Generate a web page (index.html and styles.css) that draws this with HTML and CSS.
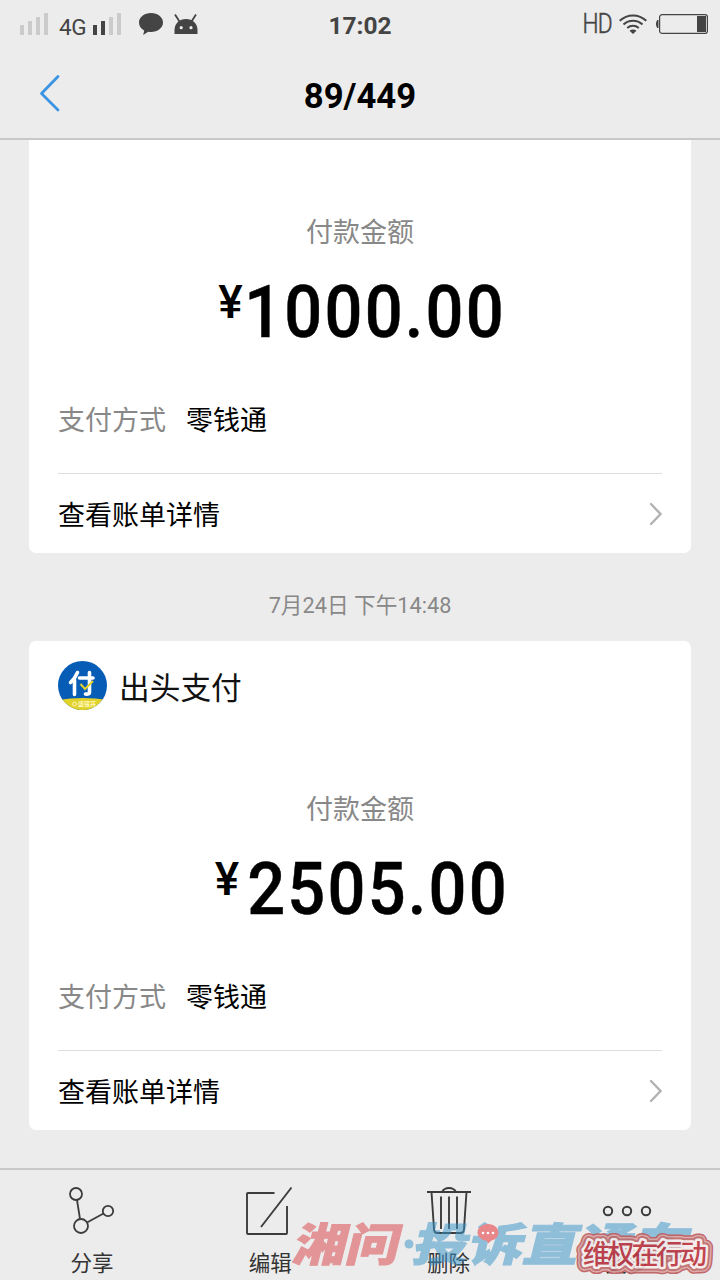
FILE: index.html
```html
<!DOCTYPE html>
<html lang="zh-CN">
<head>
<meta charset="utf-8">
<title>89/449</title>
<link rel="stylesheet" href="styles.css">
</head>
<body>
<div class="screen">
  <header class="top">
    <div class="status">
      <div class="status-left">
        <svg width="28" height="22" viewBox="0 0 28 22" fill="#cbcbcb"><path d="M0 12h4v10H0zM8 8h4v14H8zM16 4h4v18h-4zM24 0h4v22h-4z"/></svg>
        <span class="network">4G</span>
        <svg width="28" height="22" viewBox="0 0 28 22"><path fill="#444" d="M0 12h4v10H0zM8 8h4v14H8z"/><path fill="#cbcbcb" d="M16 4h4v18h-4zM24 0h4v22h-4z"/></svg>
        <svg class="bubble" width="24" height="22" viewBox="0 0 24 22"><path fill="#444" d="M12 0C5.300 0 0 4.200 0 9.500c0 3.400 2 6.300 5.200 8L4.200 22l5-3.200c1 .2 1.900.2 2.800.2 6.700 0 12-4.200 12-9.500S18.700 0 12 0z"/></svg>
        <svg class="android" width="24" height="20" viewBox="0 0 24 20"><path d="M1 .5l4.500 7M22 .5l-4.500 7" stroke="#444" stroke-width="1.800"/><path fill="#444" d="M.5 20v-4C.5 9.500 5.500 5 12 5s11.500 4.500 11.500 11v4z"/><circle cx="7.200" cy="13.700" r="1.600" fill="#ececec"/><circle cx="17" cy="13.700" r="1.600" fill="#ececec"/></svg>
      </div>
      <div class="clock">17:02</div>
      <div class="status-right">
        <span class="hd">HD</span>
        <svg class="wifi" width="28" height="20" viewBox="0 0 28 20" fill="none" stroke="#444" stroke-width="2"><path d="M.7 6.800c7.500-7.200 19.100-7.200 26.600 0M4.500 10.600c5.400-5 13.600-5 19 0M8.200 14c3.400-2.900 8.200-2.900 11.600 0"/><path d="M14 20l-3.500-3.300c2-1.600 5-1.600 7 0z" fill="#444" stroke="none"/></svg>
        <svg width="52" height="20" viewBox="0 0 52 20"><path d="M2 6v8c-2-1-2-7 0-8z" fill="#444" stroke="#444"/><rect x="3.600" y=".6" width="47.800" height="18.800" rx="2.500" fill="none" stroke="#444" stroke-width="1.200"/><path d="M41 2h9v16h-9z" fill="#444"/></svg>
      </div>
    </div>
    <div class="nav">
      <svg class="back" width="22" height="38" viewBox="0 0 22 38"><path d="M19 2.500L2.500 19.500l16.500 16.500" fill="none" stroke="#3b93e2" stroke-width="2.800" stroke-linecap="round" stroke-linejoin="round"/></svg>
      <h1 class="counter">89/449</h1>
    </div>
  </header>

  <main class="feed">
    <section class="card card-cut">
      <p class="label">付款金额</p>
      <p class="amount"><span class="yen">¥</span><span class="digits">1000.00</span></p>
      <p class="method"><span class="key">支付方式</span><span>零钱通</span></p>
      <div class="detail"><span>查看账单详情</span><svg width="14" height="24" viewBox="0 0 14 24"><path d="M3 2l9.500 10L3 22" fill="none" stroke="#b2b2b2" stroke-width="2.400" stroke-linecap="round"/></svg></div>
    </section>
    <p class="time">7月24日 下午14:48</p>
    <section class="card">
      <div class="merchant">
        <svg width="50" height="50" viewBox="0 0 50 50">
          <clipPath id="disc"><circle cx="24.500" cy="24.500" r="24.500"/></clipPath>
          <g clip-path="url(#disc)"><path fill="#075db5" d="M0 0h50v50H0z"/><path fill="#e2d22c" d="M0 39q25-4 50 0v11H0z"/></g>
          <g fill="none" stroke="#fff" stroke-width="3.600" stroke-linecap="round" stroke-linejoin="round"><path d="M19.500 11.500q-2.500 6-7 10M16.500 19v14.500M21.500 17h13.500M31.500 11.500v20q0 2-4 1.500"/></g>
          <path d="M22.500 23l4.500 5 8-8" fill="none" stroke="#e2d22c" stroke-width="2"/>
          <circle cx="16.500" cy="43" r="1.900" fill="none" stroke="#fff8bd" stroke-width="1"/>
          <text class="logo-note" x="20" y="45">盛银开</text>
        </svg>
        <span>出头支付</span>
      </div>
      <p class="label">付款金额</p>
      <p class="amount"><span class="yen yen-wide">¥</span><span class="digits">2505.00</span></p>
      <p class="method"><span class="key">支付方式</span><span>零钱通</span></p>
      <div class="detail"><span>查看账单详情</span><svg width="14" height="24" viewBox="0 0 14 24"><path d="M3 2l9.500 10L3 22" fill="none" stroke="#b2b2b2" stroke-width="2.400" stroke-linecap="round"/></svg></div>
    </section>
  </main>

  <footer class="tools">
    <div class="tool">
      <svg width="48" height="52" viewBox="0 0 48 52" fill="none" stroke="#3c3c3c" stroke-width="1.800"><circle cx="8" cy="10" r="6"/><circle cx="13" cy="42" r="7"/><circle cx="40" cy="27" r="5.200"/><path d="M9 16l3 19M19 38.500L35.500 29.500"/></svg>
      <span>分享</span>
    </div>
    <div class="tool">
      <svg width="48" height="52" viewBox="0 0 48 52" fill="none" stroke="#3c3c3c" stroke-width="1.900"><path d="M28.500 9H2q-1 0-1 1v39q0 1 1 1h38q1 0 1-1V22M45.500 3.500L15 43"/></svg>
      <span>编辑</span>
    </div>
    <div class="tool">
      <svg width="48" height="52" viewBox="0 0 48 52" fill="none" stroke="#3c3c3c" stroke-width="1.900"><path d="M2 8h44M17 8q2-4 7-4t7 4M6.500 8l2.500 37q0 4 3.500 4h23q3.500 0 3.500-4l2.500-37M16 12.500V45M24 12.500V45M32 12.500V45"/></svg>
      <span>删除</span>
    </div>
    <div class="tool">
      <svg width="50" height="52" viewBox="0 0 50 52" fill="none" stroke="#3c3c3c" stroke-width="2"><circle cx="6" cy="27" r="4.200"/><circle cx="25" cy="27" r="4.200"/><circle cx="44" cy="27" r="4.200"/></svg>
      <span>更多</span>
    </div>
    <svg class="watermark" width="430" height="70" viewBox="290 1210 430 70">
      <g opacity=".52">
        <g transform="translate(291 1261) skewX(-14)" class="mark">
          <text x="0" y="0" textLength="106" lengthAdjust="spacingAndGlyphs" fill="#d94549" stroke="#d94549">湘问</text>
          <text x="120" y="0" textLength="276" lengthAdjust="spacingAndGlyphs" fill="#3b95c9" stroke="#3b95c9">投诉直通车</text>
        </g>
        <circle cx="409" cy="1244" r="4.500" fill="#3b95c9"/>
      </g>
      <path d="M488 1224c6 0 10.500 4 10.500 8.500 0 4-3 7-7 8l-3.500 3-1-2.700c-5.500-.5-9.500-4-9.500-8.300 0-4.500 4.500-8.500 10.500-8.500z" fill="#e88689"/>
      <g fill="#fff"><circle cx="483" cy="1233" r="1.300"/><circle cx="488" cy="1233" r="1.300"/><circle cx="493" cy="1233" r="1.300"/></g>
      <g class="slogan">
        <use href="#slogan" class="s1"/>
        <use href="#slogan" class="s2"/>
        <use href="#slogan" class="s3"/>
        <use href="#slogan" class="s4"/>
        <text id="slogan" x="583" y="1263.500" textLength="124">维权在行动</text>
      </g>
    </svg>
  </footer>
</div>
</body>
</html>
```
FILE: styles.css
```css
* { box-sizing: border-box; margin: 0; padding: 0; }
body {
  background: #ececec;
  font-family: Roboto, "Noto Sans CJK SC", sans-serif;
  color: #000;
}
svg { display: block; flex: none; }
.screen {
  width: 720px;
  height: 1280px;
  display: flex;
  flex-direction: column;
  overflow: hidden;
}
.top { height: 140px; border-bottom: 2px solid #c8c8c8; }
.status {
  height: 48px;
  display: grid;
  grid-template-columns: 1fr auto 1fr;
  align-items: center;
  color: #444;
}
.status-left { display: flex; align-items: center; padding-left: 20px; }
.network { width: 45px; padding-left: 11px; padding-top: 5px; font-size: 22.5px; line-height: 26px; letter-spacing: -.5px; }
.bubble { margin-left: 18px; }
.android { margin-left: 11px; }
.clock { padding-top: 2px; font-size: 24.5px; font-weight: 700; }
.status-right { display: flex; align-items: center; justify-content: flex-end; padding-right: 12px; }
.hd {
  font-size: 27px;
  line-height: 46px;
  font-weight: 300;
  letter-spacing: -1px;
  -webkit-text-stroke: .5px #444;
  transform: scaleX(.84);
  transform-origin: right;
}
.wifi { margin: 0 9px 0 7px; }
.nav {
  height: 90px;
  display: grid;
  grid-template-columns: 80px 1fr 80px;
  align-items: center;
}
.back { margin-left: 39px; }
.counter { text-align: center; font-size: 34.7px; line-height: 40px; font-weight: 700; padding-top: 5px; }

.feed { height: 1028px; padding: 0 29px; }
.card {
  height: 489px;
  padding: 0 29px;
  border-radius: 7px;
  background: #fff;
}
.card-cut { height: 413px; padding-top: 14px; border-radius: 0 0 7px 7px; }
.merchant {
  height: 90px;
  padding-top: 20px;
  display: flex;
  gap: 11px;
  font-size: 30.7px;
  line-height: 55px;
  color: #111;
}
.logo-note { font: 700 6px "Noto Sans CJK SC", sans-serif; fill: #fff8bd; }
.label { padding-top: 64px; height: 93px; text-align: center; font-size: 27px; line-height: 30px; color: #888; }
.amount {
  height: 80px;
  margin-top: 24px;
  display: flex;
  justify-content: center;
  font-size: 73px;
  line-height: 82px;
  font-weight: 500;
}
.digits {
  margin: 0 -10px;
  letter-spacing: 2.4px;
  transform: scaleX(.915);
  -webkit-text-stroke: .5px #000;
}
.yen { padding-left: 6px; margin-right: -1px; font-size: 46px; line-height: 63px; }
.yen-wide { margin-right: 6px; }
.method { margin-top: 48px; height: 40px; display: flex; gap: 20px; font-size: 27px; line-height: 44px; }
.key { color: #888; }
.detail {
  margin-top: 34px;
  height: 80px;
  border-top: 1px solid #dedede;
  display: flex;
  align-items: center;
  justify-content: space-between;
  font-size: 27px;
}
.time { height: 88px; padding-top: 2px; text-align: center; font-size: 21.7px; line-height: 102px; color: #888; }

.tools {
  position: relative;
  height: 112px;
  padding: 0 4px 0 3px;
  border-top: 2px solid #c8c8c8;
  display: grid;
  grid-template-columns: repeat(4, 1fr);
}
.tool {
  padding-top: 14px;
  display: flex;
  flex-direction: column;
  align-items: center;
  gap: 12px;
  font-size: 21.5px;
  line-height: 32px;
  color: #333;
}
.watermark { position: absolute; right: 0; bottom: 0; }
.mark { font: 900 45px "Noto Sans CJK SC", sans-serif; stroke-width: 1px; }
.slogan { font: 500 27px "Noto Sans CJK SC", sans-serif; stroke-linejoin: round; fill: #bd343e; opacity: .9; }
.s1 { stroke: #bd5b5d; stroke-width: 15px; }
.s2 { stroke: #dda5a3; stroke-width: 12px; }
.s3 { stroke: #bd696a; stroke-width: 9px; }
.s4 { stroke: #f7eeec; stroke-width: 5px; }
```
